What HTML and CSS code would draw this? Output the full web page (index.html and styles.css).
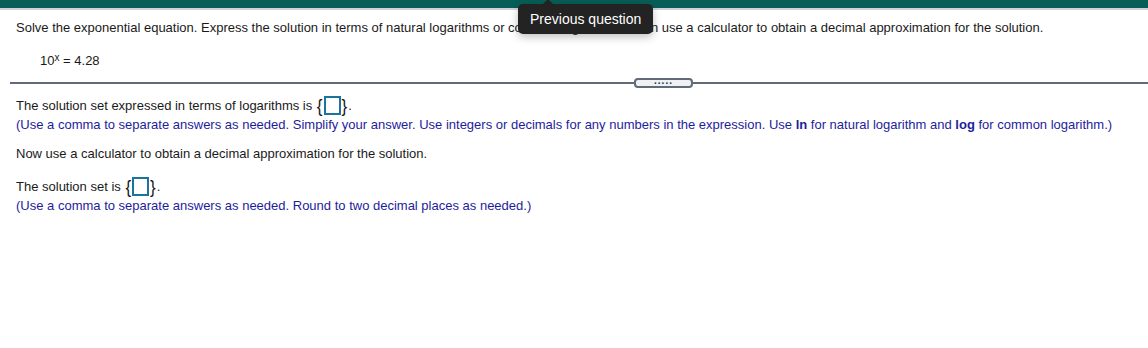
FILE: index.html
```html
<!DOCTYPE html>
<html>
<head>
    <title>Question</title>
    <link rel="stylesheet" href="styles.css">
</head>
<body>
    <div class="topbar"></div>

    <div class="tooltip">Previous question</div>

    <div class="question">
        <p class="stem">Solve the exponential equation. Express the solution in terms of natural logarithms or common logarithms. Then use a calculator to obtain a decimal approximation for the solution.</p>
        <p class="equation">10<sup>x</sup> = 4.28</p>
    </div>

    <div class="divider">
        <div class="rule rule-left"></div>
        <div class="pill"><span>.....</span></div>
        <div class="rule"></div>
    </div>

    <div class="answers">
        <p class="prompt">The solution set expressed in terms of logarithms is <span class="brace">{</span><span class="box"></span><span class="brace">}</span>.</p>
        <p class="hint">(Use a comma to separate answers as needed. Simplify your answer. Use integers or decimals for any numbers in the expression. Use <b>ln</b> for natural logarithm and <b>log</b> for common logarithm.)</p>

        <p class="step">Now use a calculator to obtain a decimal approximation for the solution.</p>

        <p class="prompt">The solution set is <span class="brace">{</span><span class="box"></span><span class="brace">}</span>.</p>
        <p class="hint">(Use a comma to separate answers as needed. Round to two decimal places as needed.)</p>
    </div>
</body>
</html>
```

FILE: styles.css
```css
body {
    margin: 0;
    font-family: "Liberation Sans", Arial, sans-serif;
    font-size: 13px;
    color: #1a1a1a;
    background-color: #fff;
}
p {
    margin: 0;
    line-height: 18px;
}
.topbar {
    height: 8px;
    background-color: #075e56;
    border-bottom: 2px solid #ccd2d8;
}
.tooltip {
    position: absolute;
    left: 518px;
    top: 4px;
    height: 30px;
    line-height: 30px;
    padding: 0 12px;
    background-color: #232323;
    color: #fff;
    font-family: "Liberation Sans", Arial, sans-serif;
    font-size: 14px;
    border-radius: 5px;
    box-shadow: 0 3px 8px rgba(0, 0, 0, 0.25);
}
.tooltip::before {
    content: "";
    position: absolute;
    left: 24px;
    top: -5px;
    border-left: 6px solid transparent;
    border-right: 6px solid transparent;
    border-bottom: 6px solid #232323;
}
.question {
    padding: 0 16px;
}
.stem {
    margin-top: 9px;
}
.equation {
    margin-top: 15px;
    padding-left: 24px;
}
.equation sup {
    font-size: 10px;
    vertical-align: 4px;
    line-height: 0;
}
.divider {
    display: flex;
    align-items: center;
    margin: 8px 0 0 10px;
    height: 10px;
}
.rule {
    flex: 1;
    height: 2px;
    background-color: #5f6b78;
}
.rule-left {
    flex: 0 0 624px;
}
.pill {
    width: 55px;
    height: 6px;
    border: 2px solid #5f6b78;
    border-radius: 4px;
    background-color: #eef2f5;
    display: flex;
    justify-content: center;
    align-items: center;
}
.pill span {
    font-size: 10px;
    font-weight: bold;
    line-height: 6px;
    letter-spacing: 1px;
    color: #2a3440;
    position: relative;
    top: -2px;
}
.answers {
    padding: 0 16px;
    margin-top: 8px;
}
.prompt {
    height: 20px;
    line-height: 20px;
}
.brace {
    font-size: 17px;
    font-weight: 300;
    display: inline-block;
    vertical-align: -1px;
    transform: scaleY(1.1);
    margin: 0 1px;
}
.box {
    display: inline-block;
    width: 13px;
    height: 15px;
    border: 2px solid #1b74a0;
    vertical-align: -5px;
}
.hint {
    color: #1d1d9c;
}
.step {
    margin-top: 11px;
}
.step + .prompt {
    margin-top: 14px;
}
```
